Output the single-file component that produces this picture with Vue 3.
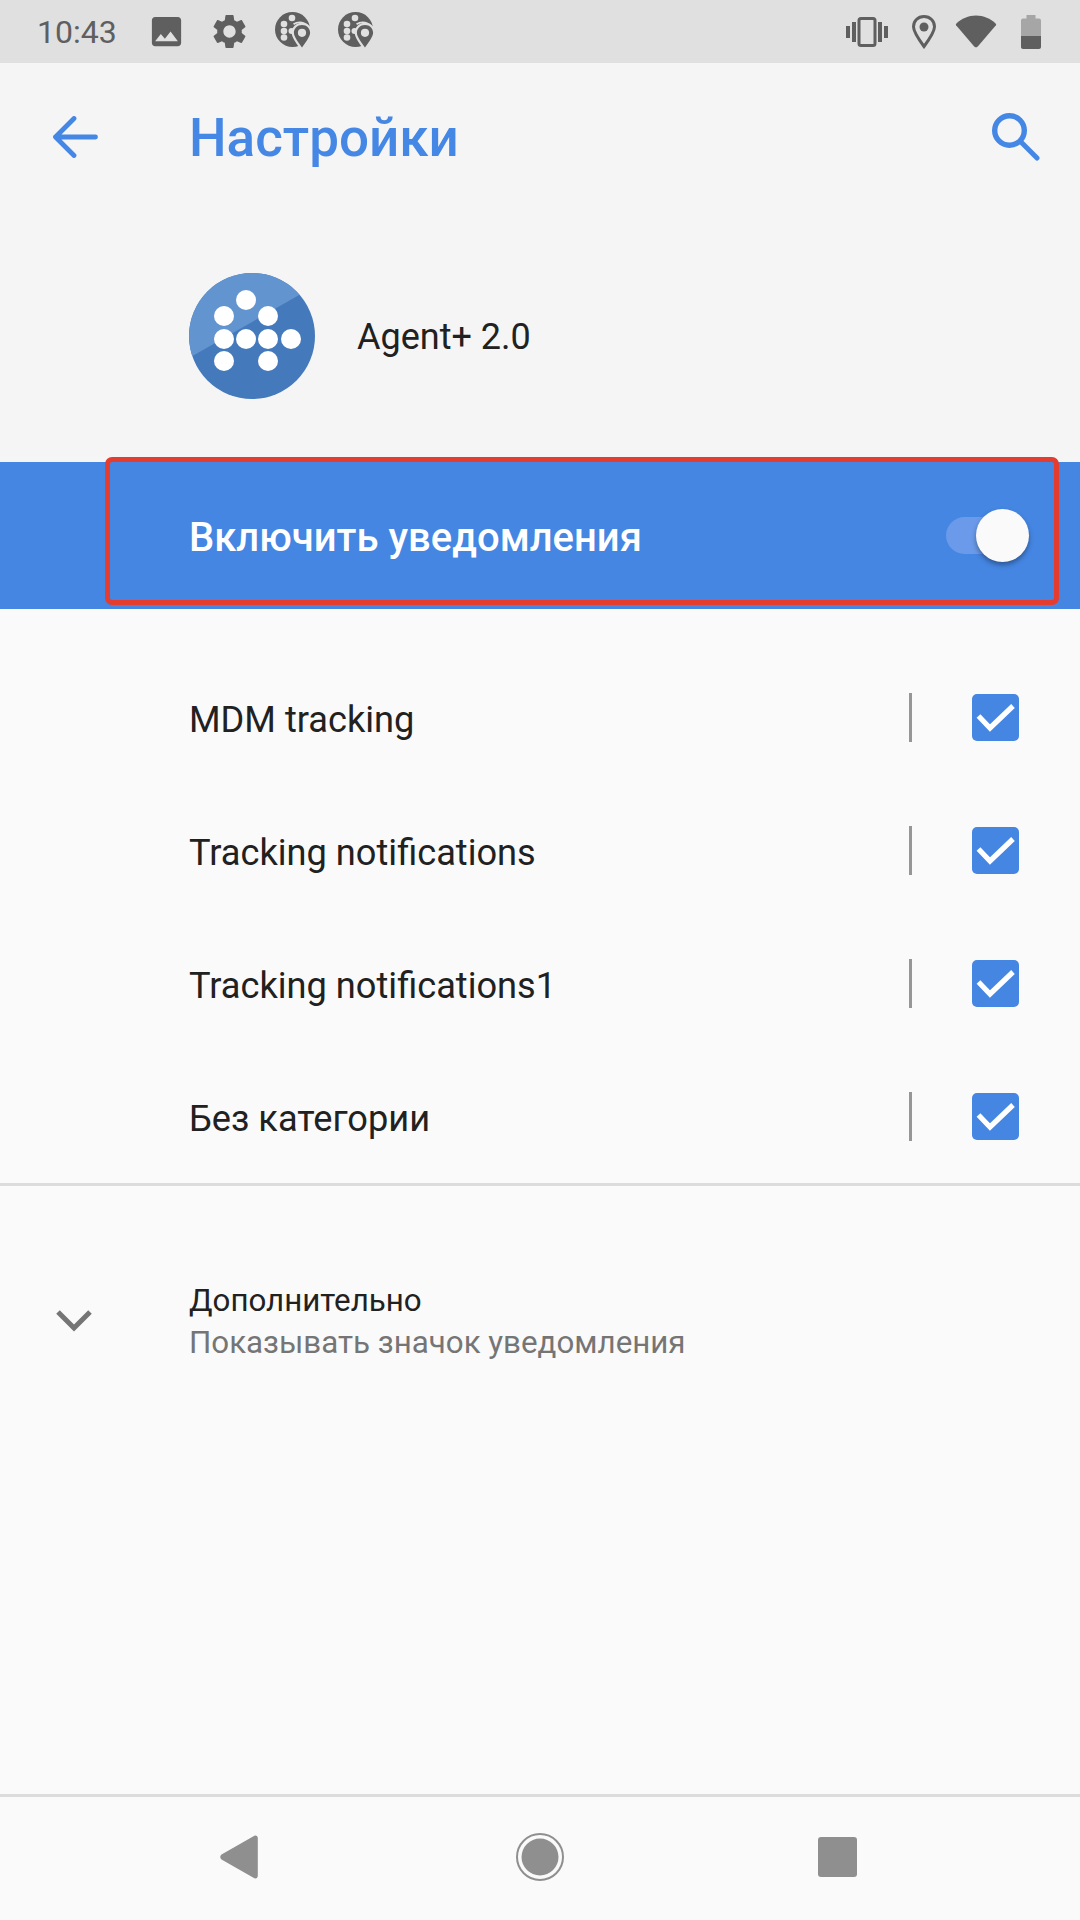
<template>
  <div class="screen">
    <!-- Status bar -->
    <div class="status-bar">
      <span class="status-time">10:43</span>
      <svg class="ic-image" width="39" height="39" viewBox="0 0 24 24" fill="#5f5f5f">
        <path d="M21 19V5c0-1.1-.9-2-2-2H5c-1.1 0-2 .9-2 2v14c0 1.1.9 2 2 2h14c1.1 0 2-.9 2-2zM8.5 13.5l2.500 3.010L14.500 12l4.500 6H5l3.500-4.500z" />
      </svg>
      <svg class="ic-gear" width="41" height="41" viewBox="0 0 24 24" fill="#5f5f5f">
        <path d="M19.14 12.94c.04-.3.06-.61.06-.94 0-.32-.02-.64-.07-.94l2.03-1.58c.18-.14.23-.41.12-.61l-1.92-3.32c-.12-.22-.37-.29-.59-.22l-2.39.96c-.5-.38-1.03-.7-1.62-.94L14.4 2.81c-.04-.24-.24-.41-.48-.41h-3.84c-.24 0-.43.17-.47.41L9.25 5.35c-.59.24-1.13.57-1.62.94L5.24 5.33c-.22-.08-.47 0-.59.22L2.74 8.87c-.12.21-.08.47.12.61l2.03 1.58c-.05.3-.09.63-.09.94s.02.64.07.94l-2.03 1.58c-.18.14-.23.41-.12.61l1.92 3.32c.12.22.37.29.59.22l2.39-.96c.5.38 1.03.7 1.62.94l.36 2.54c.05.24.24.41.48.41h3.84c.24 0 .44-.17.47-.41l.36-2.54c.59-.24 1.13-.56 1.62-.94l2.39.96c.22.08.47 0 .59-.22l1.92-3.32c.12-.22.07-.47-.12-.61l-2.01-1.58zM12 15.6c-1.98 0-3.6-1.62-3.6-3.6s1.62-3.6 3.6-3.6 3.6 1.62 3.6 3.6-1.62 3.6-3.6 3.6z" />
      </svg>
      <svg v-for="n in 2" :key="n" class="ic-agent" width="38" height="40" viewBox="0 0 38 40">
        <circle cx="17.500" cy="17.500" r="17.500" fill="#5f5f5f" />
        <g fill="#e0e0e0">
          <circle cx="17" cy="6" r="3.300" />
          <circle cx="9" cy="12" r="3.300" />
          <circle cx="9" cy="19" r="3.300" />
          <circle cx="9" cy="25.500" r="3.300" />
          <circle cx="16.500" cy="19" r="3" />
          <path d="M18 11.500c5-3.400 11.500-2.600 15.500 1.800l-1.400 1.200c-3.400-3.500-9-4.200-13-1.500z" />
        </g>
        <path d="M27 10.800c-6 0-10.300 4.400-10.300 10 0 3.900 3.500 9.200 8.600 16.100.9 1.200 2.500 1.200 3.400 0 5.100-6.900 8.600-12.200 8.600-16.100 0-5.600-4.300-10-10.300-10z" fill="#e0e0e0" />
        <path d="M27 13c-4.700 0-8.100 3.400-8.100 7.800 0 3.200 3.100 8 8.100 14.800 5-6.800 8.100-11.600 8.100-14.800 0-4.400-3.400-7.800-8.100-7.800z" fill="#5f5f5f" />
        <circle cx="27" cy="20.800" r="4.100" fill="#e0e0e0" />
      </svg>
      <div class="status-spacer"></div>
      <svg class="ic-vibrate" width="42" height="30" viewBox="0 0 42 30" fill="#5f5f5f">
        <rect x="0" y="9" width="4" height="12" />
        <rect x="6" y="5" width="4" height="20" />
        <rect x="32" y="5" width="4" height="20" />
        <rect x="38" y="9" width="4" height="12" />
        <rect x="13" y="1.500" width="16" height="27" rx="2" fill="none" stroke="#5f5f5f" stroke-width="3" />
      </svg>
      <svg class="ic-pin" width="24" height="34" viewBox="0 0 24 34">
        <path d="M12 1.500C5.800 1.500 1.500 6 1.500 11.800c0 5.200 4.800 12 10.500 19.700 5.700-7.700 10.500-14.500 10.500-19.700C22.500 6 18.200 1.500 12 1.500z" fill="none" stroke="#5f5f5f" stroke-width="3" />
        <circle cx="12" cy="12" r="4.500" fill="#5f5f5f" />
      </svg>
      <svg class="ic-wifi" width="42" height="33" viewBox="0 0 42 33">
        <path d="M1.200 8.800C6.500 3.600 13.500.6 21 .6s14.500 3 19.800 8.200c.5.500.5 1 .1 1.500L22.800 31.600c-1 1.100-2.600 1.100-3.600 0L1.100 10.300c-.4-.5-.4-1 .1-1.500z" fill="#5f5f5f" />
      </svg>
      <svg class="ic-battery" width="20" height="34" viewBox="0 0 20 34">
        <path d="M5.500 0h9v3.500H18c1.100 0 2 .9 2 2V21H0V5.500c0-1.100.9-2 2-2h3.500z" fill="#a6a6a6" />
        <path d="M0 21h20v11c0 1.100-.9 2-2 2H2c-1.100 0-2-.9-2-2z" fill="#5f5f5f" />
      </svg>
    </div>

    <!-- Header block -->
    <div class="head">
      <div class="toolbar">
        <svg class="ic-back" width="46" height="42" viewBox="0 0 46 42" fill="none" stroke="#4587e4" stroke-width="4.800" stroke-linecap="round" stroke-linejoin="round">
          <path d="M43.500 21H3.500M22 2.500 3.500 21 22 39.500" />
        </svg>
        <span class="title">Настройки</span>
        <svg class="ic-search" width="48" height="48" viewBox="0 0 48 48" fill="none" stroke="#4587e4" stroke-linecap="round">
          <circle cx="17.500" cy="17.500" r="14.800" stroke-width="5.400" />
          <path d="M29 29 45 45" stroke-width="5" />
        </svg>
      </div>
      <div class="app-row">
        <svg class="app-icon" width="126" height="126" viewBox="0 0 126 126">
          <defs>
            <clipPath id="app-clip"><circle cx="63" cy="63" r="63" /></clipPath>
          </defs>
          <g clip-path="url(#app-clip)">
            <rect width="126" height="126" fill="#4479bc" />
            <path d="M0 0h126v13L0 85z" fill="#6294cf" />
          </g>
          <g fill="#fff">
            <circle cx="57" cy="27" r="10" />
            <circle cx="35" cy="43" r="10" />
            <circle cx="79" cy="43" r="10" />
            <circle cx="35" cy="66" r="10" />
            <circle cx="57" cy="66" r="10" />
            <circle cx="79" cy="66" r="10" />
            <circle cx="102" cy="66" r="10" />
            <circle cx="35" cy="88" r="10" />
            <circle cx="79" cy="88" r="10" />
          </g>
        </svg>
        <span class="app-name">Agent+ 2.0</span>
      </div>
    </div>

    <!-- Master switch -->
    <div class="master">
      <span class="master-label">Включить уведомления</span>
      <div class="switch">
        <div class="switch-track"></div>
        <div class="switch-thumb"></div>
      </div>
      <div class="highlight"></div>
    </div>

    <!-- Channels -->
    <div class="channels">
      <div v-for="c in channels" :key="c" class="channel">
        <span class="channel-name">{{ c }}</span>
        <div class="channel-sep"></div>
        <div class="check">
          <svg width="47" height="47" viewBox="0 0 47 47" fill="none" stroke="#fff" stroke-width="5.200">
            <path d="M6.500 22 18 34 41 12" />
          </svg>
        </div>
      </div>
    </div>

    <div class="divider"></div>

    <!-- Advanced -->
    <div class="advanced">
      <svg class="chevron" width="36" height="22" viewBox="0 0 36 22" fill="none" stroke="#757575" stroke-width="5">
        <path d="M2 2 18 18 34 2" />
      </svg>
      <div class="advanced-text">
        <span class="advanced-title">Дополнительно</span>
        <span class="advanced-sub">Показывать значок уведомления</span>
      </div>
    </div>

    <div class="grow"></div>

    <!-- Navigation bar -->
    <div class="nav">
      <svg width="38" height="44" viewBox="0 0 38 44" fill="#8f8f8f">
        <path d="M33.500 1.200c2-1.500 4.300-.4 4.300 2v37.600c0 2.400-2.300 3.500-4.300 2L1.500 24.500c-1.700-1.300-1.700-3.700 0-5z" />
      </svg>
      <svg class="nav-home" width="48" height="48" viewBox="0 0 48 48">
        <circle cx="24" cy="24" r="23" fill="none" stroke="#8f8f8f" stroke-width="2" />
        <circle cx="24" cy="24" r="18.500" fill="#8f8f8f" />
      </svg>
      <div class="nav-square"></div>
    </div>
  </div>
</template>

<script setup>
const channels = ['MDM tracking', 'Tracking notifications', 'Tracking notifications1', 'Без категории']
</script>

<style>
html, body { margin: 0; background: #fafafa; }
</style>

<style scoped>
.screen {
  width: 1080px;
  height: 1920px;
  display: flex;
  flex-direction: column;
  background: #fafafa;
  font-family: Roboto, 'Noto Sans', sans-serif;
  overflow: hidden;
}

.status-bar {
  height: 63px;
  background: #e0e0e0;
  display: flex;
  align-items: center;
  padding: 0 39px 0 37px;
  flex-shrink: 0;
}
.status-time { font-size: 32px; color: #5f5f5f; width: 110px; }
.ic-gear { margin-left: 23px; }
.ic-agent { margin-left: 25px; margin-top: 1px; }
.status-spacer { flex: 1; }
.ic-pin { margin-left: 24px; }
.ic-wifi { margin-left: 19px; }
.ic-battery { margin-left: 24px; }

.head { background: #f5f5f5; height: 399px; flex-shrink: 0; }

.toolbar {
  height: 147px;
  display: flex;
  align-items: center;
  padding: 0 40px 0 52px;
}
.title {
  margin-left: 91px;
  padding-top: 2px;
  font-size: 53px;
  font-weight: 500;
  color: #4587e4;
  flex: 1;
}

.app-row {
  display: flex;
  align-items: center;
  padding: 63px 0 0 189px;
}
.app-name { margin-left: 42px; padding-top: 2px; font-size: 36px; color: #212121; }

.master {
  position: relative;
  height: 147px;
  background: #4586e3;
  display: flex;
  align-items: center;
  justify-content: space-between;
  padding: 0 51px 0 189px;
  flex-shrink: 0;
}
.master-label { padding-top: 4px; font-size: 40px; font-weight: 500; color: #fff; }
.switch { position: relative; width: 83px; height: 53px; }
.switch-track {
  position: absolute;
  left: 0;
  right: 6px;
  top: 8px;
  height: 37px;
  border-radius: 19px;
  background: #6a9ae9;
}
.switch-thumb {
  position: absolute;
  right: 0;
  top: 0;
  width: 53px;
  height: 53px;
  border-radius: 50%;
  background: #fafafa;
  box-shadow: 0 3px 5px rgba(0, 0, 0, 0.35);
}
.highlight {
  position: absolute;
  left: 105px;
  right: 21px;
  top: -5px;
  height: 148px;
  box-sizing: border-box;
  border: 5px solid #e53c30;
  border-radius: 7px;
}

.channels { padding-top: 42px; flex-shrink: 0; }
.channel {
  height: 133px;
  display: flex;
  align-items: center;
  padding: 0 61px 0 189px;
}
.channel-name { flex: 1; padding-top: 4px; font-size: 36.2px; color: #212121; }
.channel-sep { width: 3px; height: 49px; background: #969696; margin-right: 60px; }
.check {
  width: 47px;
  height: 47px;
  border-radius: 5px;
  background: #4586e3;
}
.check svg { display: block; }

.divider { height: 3px; background: #dcdcdc; flex-shrink: 0; }

.advanced {
  display: flex;
  align-items: center;
  padding: 92px 0 0 56px;
  flex-shrink: 0;
}
.advanced-text { display: flex; flex-direction: column; margin-left: 97px; padding-top: 2px; }
.advanced-title { font-size: 31.3px; line-height: 42px; color: #212121; }
.advanced-sub { font-size: 31.3px; line-height: 42px; color: #757575; }

.grow { flex: 1; }

.nav {
  height: 120px;
  padding: 0 223px 3px 220px;
  border-top: 3px solid #dcdcdc;
  display: flex;
  align-items: center;
  justify-content: space-between;
  flex-shrink: 0;
}
.nav-home { margin-left: 4px; }
.nav-square { width: 39px; height: 40px; border-radius: 3px; background: #8f8f8f; }
</style>
